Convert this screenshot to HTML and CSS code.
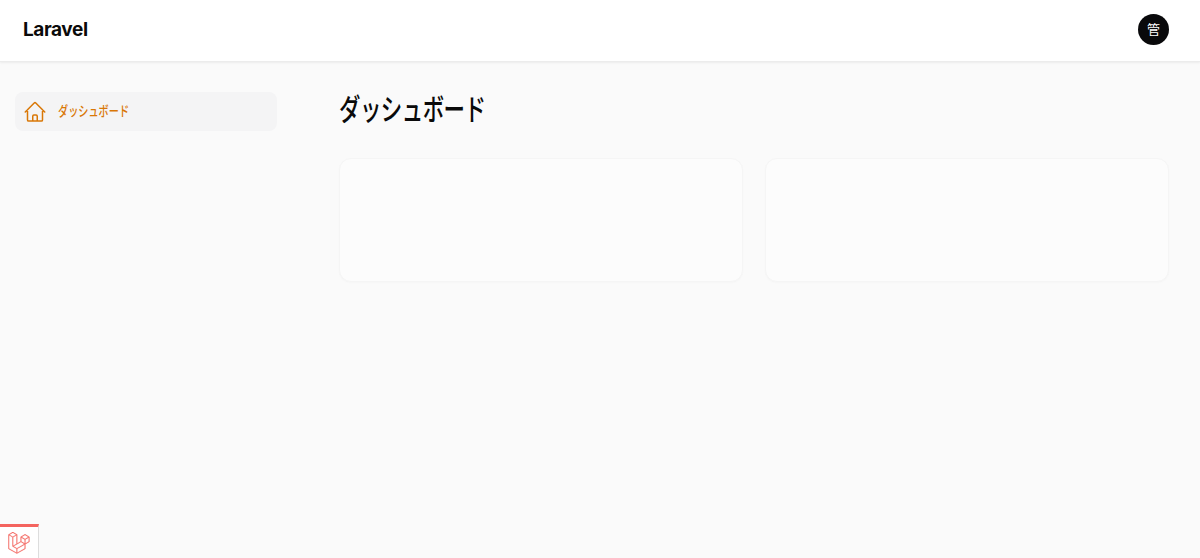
FILE: index.html
```html
<!DOCTYPE html>
<html lang="ja">

<head>
  <title>ダッシュボード - Laravel</title>
  <link rel="stylesheet" href="styles.css">
</head>

<body>
  <header class="topbar">
    <a class="brand">Laravel</a>
    <div class="avatar">管</div>
  </header>

  <div class="layout">
    <nav class="sidebar">
      <a class="nav-item">
        <svg class="nav-icon" viewBox="0 0 24 24" fill="none" stroke="currentColor" stroke-width="1.5" stroke-linecap="round" stroke-linejoin="round">
          <path d="M2.25 12l8.954-8.955c.44-.439 1.152-.439 1.591 0L21.75 12M4.5 9.75v10.125c0 .621.504 1.125 1.125 1.125H9.75v-4.875c0-.621.504-1.125 1.125-1.125h2.25c.621 0 1.125.504 1.125 1.125V21h4.125c.621 0 1.125-.504 1.125-1.125V9.75M8.25 21h8.25"/>
        </svg>
        <span class="nav-label">ダッシュボード</span>
      </a>
    </nav>

    <main class="content">
      <h1 class="page-title">ダッシュボード</h1>
      <div class="widgets">
        <section class="card"></section>
        <section class="card"></section>
      </div>
    </main>
  </div>

  <!-- debugbar -->
  <div class="debugbar">
    <svg class="debugbar-logo" viewBox="0 0 50 52" fill="currentColor" stroke="currentColor" stroke-width="0.6">
      <path d="M49.626 11.564a.809.809 0 0 1 .028.209v10.972a.8.8 0 0 1-.402.694l-9.209 5.302V39.25c0 .286-.152.55-.4.694L20.42 51.01c-.044.025-.092.041-.14.058-.018.006-.035.017-.054.022a.805.805 0 0 1-.41 0c-.022-.006-.042-.018-.063-.026-.044-.016-.09-.03-.132-.054L.402 39.944A.801.801 0 0 1 0 39.25V6.334c0-.072.01-.142.028-.21.006-.023.02-.044.028-.067.015-.042.029-.085.051-.124.015-.026.037-.047.055-.071.023-.032.044-.065.071-.093.023-.023.053-.04.079-.06.029-.024.055-.05.088-.069h.001l9.61-5.533a.802.802 0 0 1 .8 0l9.61 5.533h.002c.032.02.059.045.088.068.026.02.055.038.078.06.028.029.048.062.072.094.017.024.04.045.054.071.023.04.036.082.052.124.008.023.022.044.028.068a.809.809 0 0 1 .028.209v20.559l8.008-4.611v-10.51c0-.07.01-.141.028-.208.007-.024.02-.045.028-.068.016-.042.03-.085.052-.124.015-.026.037-.047.054-.071.024-.032.044-.065.072-.093.023-.023.052-.04.078-.06.03-.024.056-.05.088-.069h.001l9.611-5.533a.801.801 0 0 1 .8 0l9.61 5.533c.034.02.06.045.09.068.025.02.054.038.077.06.028.029.048.062.072.094.018.024.04.045.054.071.023.039.036.082.052.124.009.023.022.044.028.068zm-1.574 10.718v-9.124l-3.363 1.936-4.646 2.675v9.124l8.01-4.611zm-9.61 16.505v-9.13l-4.57 2.61-13.05 7.448v9.216l17.62-10.144zM1.602 7.719v31.068L19.22 48.93v-9.214l-9.204-5.209-.003-.002-.004-.002c-.031-.018-.057-.044-.086-.066-.025-.02-.054-.036-.076-.058l-.002-.003c-.026-.025-.044-.056-.066-.084-.02-.027-.044-.05-.06-.078l-.001-.003c-.018-.03-.029-.066-.042-.1-.013-.03-.03-.058-.038-.09v-.001c-.01-.038-.012-.078-.016-.117-.004-.03-.012-.06-.012-.09v-.002-21.481L4.965 9.654 1.602 7.72zm8.81-5.994L2.405 6.334l8.005 4.609 8.006-4.61-8.006-4.608zm4.164 28.764l4.645-2.674V7.719l-3.363 1.936-4.646 2.675v20.096l3.364-1.937zM39.243 7.164l-8.006 4.609 8.006 4.609 8.005-4.61-8.005-4.608zm-.801 10.605l-4.646-2.675-3.363-1.936v9.124l4.645 2.674 3.364 1.937v-9.124zM20.02 38.33l11.743-6.704 5.87-3.35-8-4.606-9.211 5.303-8.395 4.833 7.993 4.524z"/>
    </svg>
  </div>
</body>

</html>
```

FILE: styles.css
```css
/* Panel layout */
* {
  box-sizing: border-box;
}

body {
  margin: 0;
  min-height: 558px;
  background-color: #fafafa;
  color: #0a0a0a;
  font-family: Inter, "Noto Sans CJK JP", sans-serif;
  overflow: hidden;
}

.topbar {
  display: flex;
  align-items: center;
  justify-content: space-between;
  height: 62px;
  padding: 0 31px 2px 23px;
  background-color: #fff;
  box-shadow: 0 1px 2px rgba(0, 0, 0, 0.06);
  border-bottom: 1px solid #ececec;
}

.brand {
  font-size: 19px;
  font-weight: 700;
  letter-spacing: -0.4px;
  line-height: 28px;
}

.avatar {
  display: flex;
  align-items: center;
  justify-content: center;
  width: 31px;
  height: 31px;
  padding-bottom: 2px;
  border-radius: 50%;
  background-color: #09090b;
  color: #fff;
  font-size: 13px;
}

.layout {
  display: flex;
}

.sidebar {
  width: 292px;
  padding: 30px 15px 0;
}

.nav-item {
  display: flex;
  align-items: center;
  gap: 11px;
  height: 39px;
  padding: 0 8px;
  border-radius: 8px;
  background-color: #f4f4f5;
  color: #d97706;
  font-size: 14px;
  font-weight: 500;
}

.nav-icon {
  width: 24px;
  height: 24px;
  flex-shrink: 0;
}

/* the kana in the reference are narrower than Noto's full width ones */
.nav-label {
  display: inline-block;
  padding-bottom: 3px;
  transform: scaleX(0.725);
  transform-origin: left center;
}

.content {
  flex: 1;
  padding: 29px 31px 0 47px;
}

.page-title {
  margin: 0 0 31px;
  font-size: 30px;
  font-weight: 500;
  letter-spacing: -0.75px;
  line-height: 36px;
  transform: scaleX(0.715);
  transform-origin: left center;
}

.widgets {
  display: grid;
  grid-template-columns: 1fr 1fr;
  gap: 22px;
}

.card {
  height: 124px;
  border: 1px solid #f5f5f5;
  border-radius: 12px;
  background-color: #fcfcfc;
  box-shadow: 0 1px 2px rgba(0, 0, 0, 0.02);
}

/* Debugbar tab in the corner */
.debugbar {
  position: fixed;
  left: 0;
  bottom: 0;
  display: flex;
  align-items: center;
  justify-content: center;
  width: 39px;
  height: 34px;
  border-top: 3px solid #f4645f;
  border-right: 1px solid #ddd;
  background-color: #fff;
  color: #f4645f;
}

.debugbar-logo {
  width: 22px;
  height: 22px;
}
```
